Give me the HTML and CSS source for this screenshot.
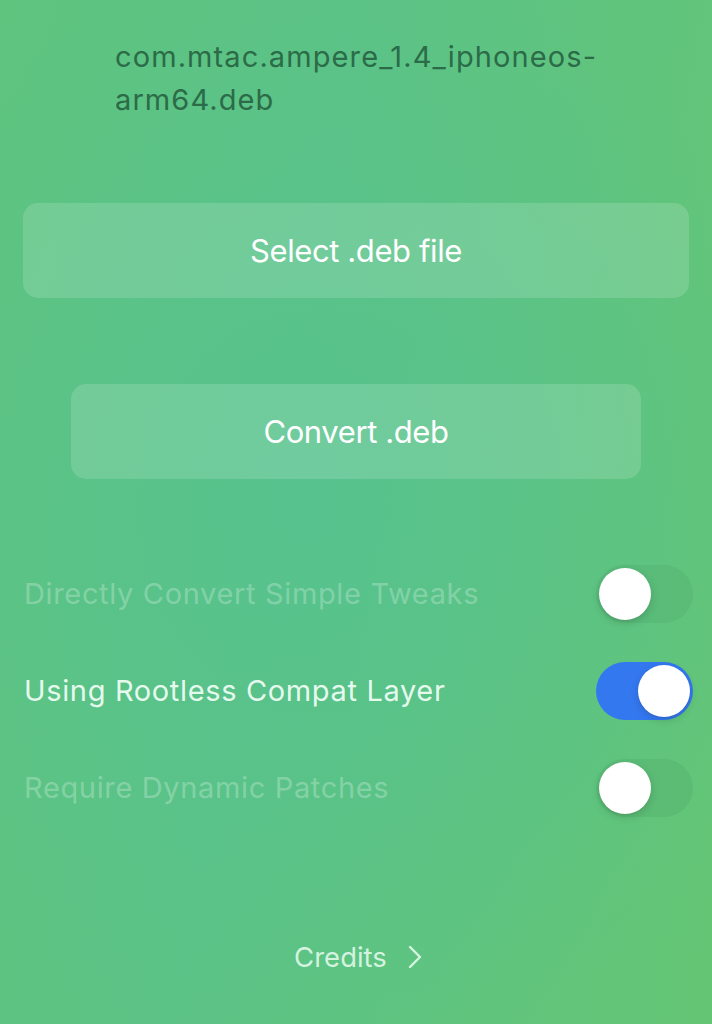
FILE: index.html
```html
<!DOCTYPE html>
<html>
<head>
<meta charset="utf-8">
<link rel="stylesheet" href="styles.css">
</head>
<body>
<div class="page">
  <div class="filename">com.mtac.ampere_1.4_iphoneos-<br>arm64.deb</div>
  <div class="btn btn-select">Select .deb file</div>
  <div class="btn btn-convert">Convert .deb</div>
  <div class="options">
    <div class="row disabled">
      <span class="label">Directly Convert Simple Tweaks</span>
      <span class="toggle"><span class="knob"></span></span>
    </div>
    <div class="row">
      <span class="label">Using Rootless Compat Layer</span>
      <span class="toggle on"><span class="knob"></span></span>
    </div>
    <div class="row disabled">
      <span class="label">Require Dynamic Patches</span>
      <span class="toggle"><span class="knob"></span></span>
    </div>
  </div>
  <div class="credits">
    <span>Credits</span>
    <svg class="chev" width="14" height="24" viewBox="0 0 14 24"><path d="M2 2 L12 12 L2 22" fill="none" stroke="currentColor" stroke-width="2.4" stroke-linecap="round" stroke-linejoin="round"/></svg>
  </div>
</div>
</body>
</html>
```
FILE: styles.css
```css
html, body {
  margin: 0;
  padding: 0;
}
body {
  width: 712px;
  height: 1024px;
  overflow: hidden;
  font-family: Inter, "Open Sans", "Liberation Sans", sans-serif;
  background:
    radial-gradient(ellipse 70% 55% at 45% 50%, rgba(86, 194, 142, 0.9), rgba(86, 194, 142, 0) 100%),
    linear-gradient(100deg, #5ec47e 0%, #5cc386 40%, #64c574 100%);
}
.page {
  display: flex;
  flex-direction: column;
  height: 1024px;
}
.filename {
  margin: 35px 0 0 115px;
  font-size: 29px;
  line-height: 43px;
  color: #2c6b48;
  letter-spacing: 1.1px;
}
.btn {
  height: 95px;
  border-radius: 15px;
  background: rgba(255, 255, 255, 0.15);
  display: flex;
  align-items: center;
  justify-content: center;
  color: #ffffff;
  font-size: 31px;
  letter-spacing: -0.4px;
}
.btn-select {
  margin: 82px 23px 0 23px;
}
.btn-convert {
  margin: 86px 71px 0 71px;
}
.options {
  margin-top: 66px;
  display: flex;
  flex-direction: column;
}
.row {
  height: 97px;
  display: flex;
  align-items: center;
  justify-content: space-between;
  padding: 0 19px 0 24px;
}
.label {
  font-size: 29px;
  color: rgba(245, 255, 248, 0.93);
  letter-spacing: 0.65px;
}
.row.disabled .label {
  color: rgba(255, 255, 255, 0.27);
}
.toggle {
  width: 97px;
  height: 58px;
  border-radius: 29px;
  background: rgba(0, 40, 10, 0.05);
  display: flex;
  align-items: center;
  padding: 0 3px;
  box-sizing: border-box;
}
.toggle.on {
  background: #3478f0;
  justify-content: flex-end;
}
.knob {
  width: 52px;
  height: 52px;
  border-radius: 50%;
  background: #ffffff;
  box-shadow: 0 3px 8px rgba(0, 0, 0, 0.15), 0 1px 1px rgba(0, 0, 0, 0.06);
}
.credits {
  margin-top: 104px;
  display: flex;
  align-items: center;
  justify-content: center;
  gap: 21px;
  height: 34px;
  font-size: 27.5px;
  color: rgba(240, 255, 245, 0.82);
  padding-left: 4px;
}
.chev {
  color: rgba(240, 255, 245, 0.82);
}
```
